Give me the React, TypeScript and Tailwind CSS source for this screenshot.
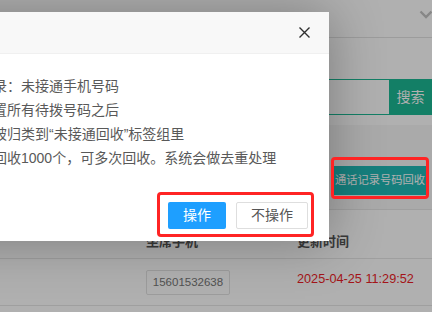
const ChevronDown = () => (
  <svg width="14" height="9" viewBox="0 0 14 9" fill="none">
    <path d="M1.5 1.5L7 7L12.5 1.5" stroke="#c4c4c4" strokeWidth="2.4" />
  </svg>
);

const CloseIcon = () => (
  <svg width="11" height="11" viewBox="0 0 11 11" fill="none">
    <path d="M0.5 0.5L10.5 10.5M10.5 0.5L0.5 10.5" stroke="#2f2f2f" strokeWidth="1.4" />
  </svg>
);

const App = () => {
  return (
    <div className="relative h-[312px] w-[432px] overflow-hidden bg-white font-['Liberation_Sans','Noto_Sans_CJK_SC',sans-serif]">
      {/* page behind the layer */}
      <div className="flex h-[38px] items-start justify-end border-b border-[#e2e2e2] pt-[10px]">
        <div className="-mr-[1px]">
          <ChevronDown />
        </div>
      </div>

      <div className="mt-[41px] flex h-[36px] pl-[200px]">
        <div className="flex-1 border border-r-0 border-[#1cb894] bg-white" />
        <button className="flex w-[43px] items-center justify-center bg-[#1cb894] text-[14px] text-white">
          搜索
        </button>
      </div>

      <div className="mt-[10px] flex h-[85px] items-start justify-end border-b border-[#e6e6e6] bg-[#f7f7f7] pr-[5px] pt-[41px]">
        <div className="flex h-[29px] w-[94px] items-center justify-center whitespace-nowrap bg-[#21b9b6] text-[11.25px] text-white">
          通话记录号码回收
        </div>
      </div>

      <div className="flex h-[49px] border-b border-[#e6e6e6] pl-[146px] pt-[22px] text-[13px] font-semibold leading-[20px] text-[#555]">
        <div className="w-[151px]">坐席手机</div>
        <div>更新时间</div>
      </div>

      <div className="flex h-[47px] items-center border-b border-[#e6e6e6] pl-[146px]">
        <div className="w-[151px]">
          <span className="inline-flex h-[25px] w-[84px] items-center justify-center rounded-[2px] border border-[#e2e2e2] text-[11.5px] text-[#777]">
            15601532638
          </span>
        </div>
        <div className="-mt-[4px] text-[12.7px] text-[#ee1d27]">2025-04-25 11:29:52</div>
      </div>

      {/* shade */}
      <div className="absolute inset-0 bg-black/[0.31]" />

      {/* layer */}
      <div className="absolute left-[-69px] top-[12px] w-[398px] bg-white shadow-[1px_1px_50px_rgba(0,0,0,0.3)]">
        <div className="relative h-[42px] border-b border-[#f0f0f0] bg-[#f8f8f8] pl-[20px] text-[14px] leading-[41px] text-[#333]">
          提示
          <span className="absolute right-[19px] top-[15px]">
            <CloseIcon />
          </span>
        </div>
        <div className="pl-[20px] pt-[20px] text-[14px] leading-[24px] text-[#595959] whitespace-nowrap">
          <div>通话记录：未接通手机号码</div>
          <div>号码放置所有待拨号码之后</div>
          <div>号码将被归类到“未接通回收”标签组里</div>
          <div>每次可回收1000个，可多次回收。系统会做去重处理</div>
        </div>
        <div className="mt-[32px] flex justify-end pb-[12px] pr-[21px]">
          <div className="relative flex gap-[10px]">
            <button className="h-[27px] rounded-[2px] bg-[#1e9fff] px-[15px] text-[14px] text-white">
              操作
            </button>
            <button className="h-[27px] rounded-[2px] border border-[#dedede] bg-white px-[14px] text-[14px] text-[#555]">
              不操作
            </button>
            <div className="absolute -bottom-[8px] -left-[11px] -right-[6px] -top-[10px] rounded-[4px] border-[3px] border-[#ff2424]" />
          </div>
        </div>
      </div>

      <div className="absolute left-[331px] top-[157px] h-[42px] w-[98px] rounded-[4px] border-[3px] border-[#ff2424]" />
    </div>
  );
};

export default App;
